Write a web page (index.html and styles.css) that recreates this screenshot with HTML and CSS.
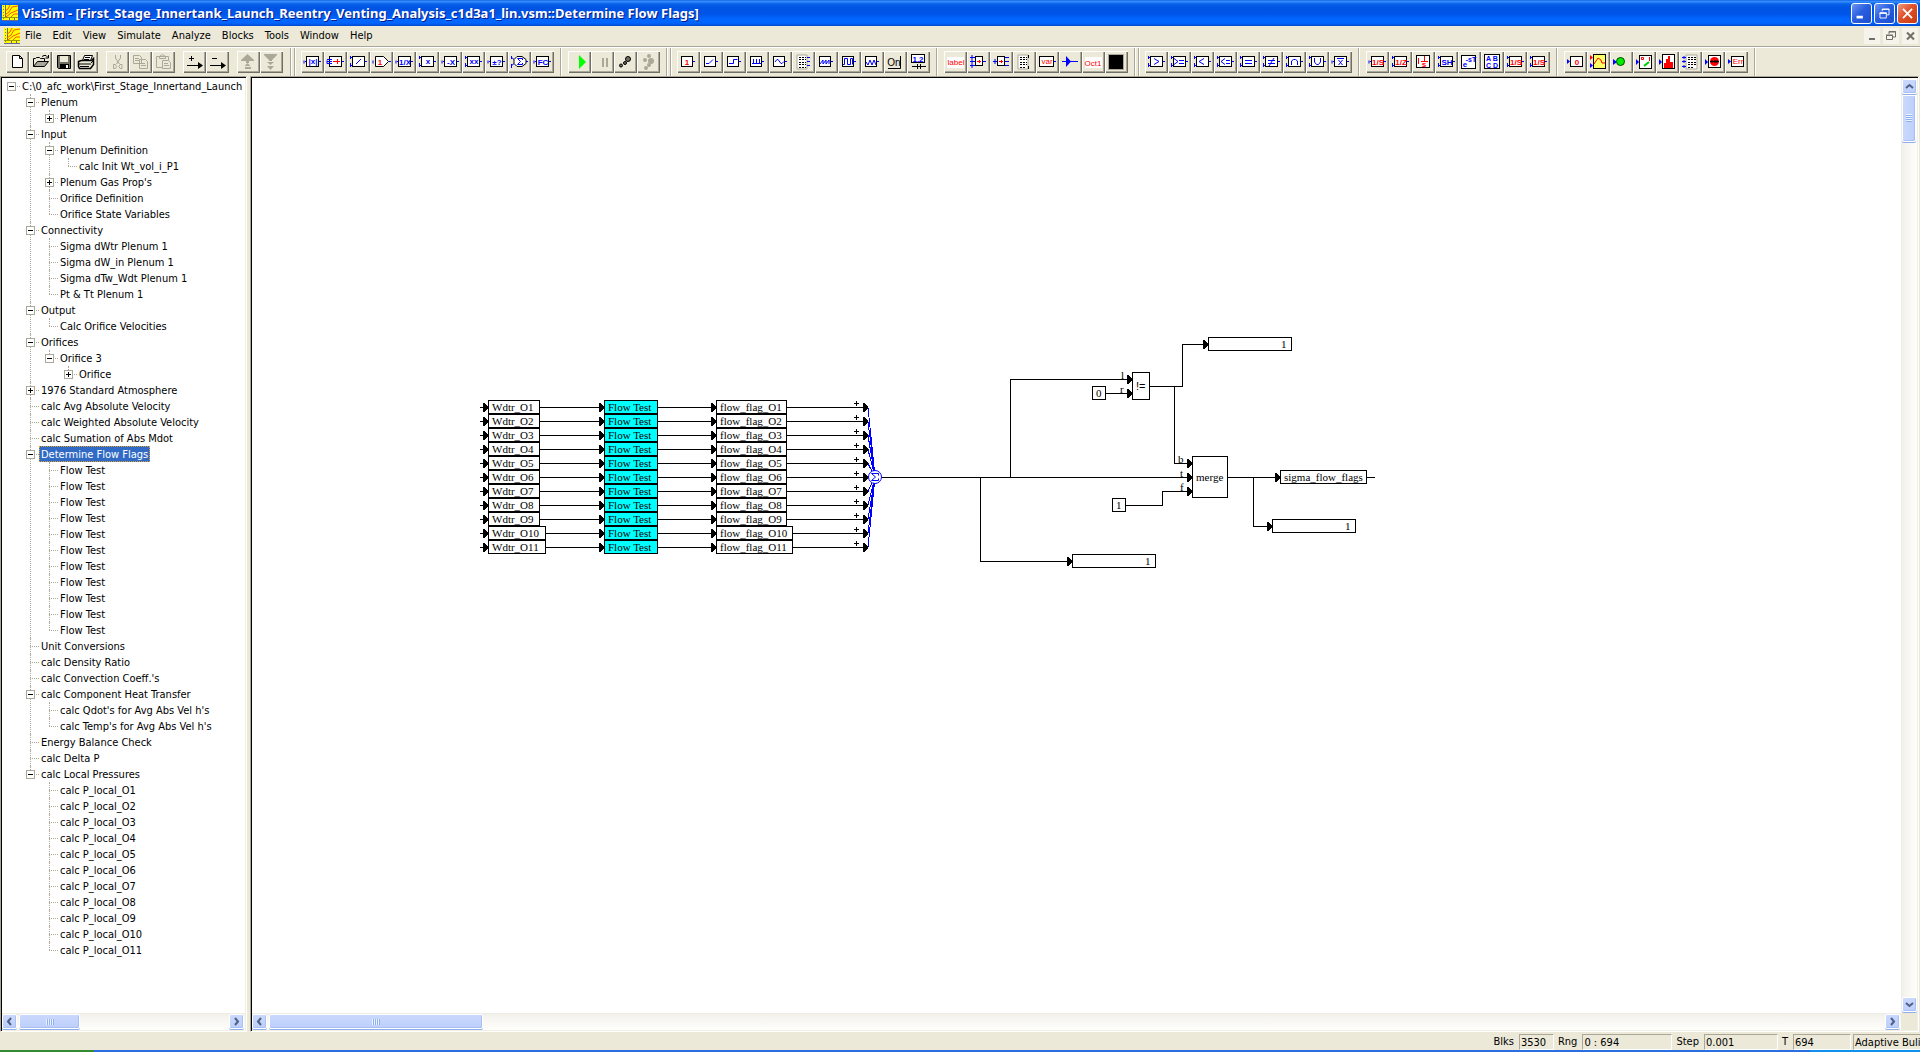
FILE: index.html
```html
<!DOCTYPE html>
<html lang="en">
<head>
<meta charset="utf-8">
<title>VisSim</title>
<link rel="stylesheet" href="styles.css">
</head>
<body>
<svg class="defs" aria-hidden="true">
  <symbol id="app" viewBox="0 0 16 16">
    <rect width="16" height="16" fill="#ff0"/>
    <path d="M0 15.500h16M3.500 0v12M7.500 13v3M12.500 13v3" stroke="#669" fill="none"/>
    <path d="M0 12.500h16" stroke="#990" />
    <path d="M3 6l3-2 2-4M3 10l4-3 3-5 6-1M4 12l5-4 7-3M9 12l3-3h4" stroke="#f50" fill="none"/>
    <path d="M1.500 1v14" stroke="#882" stroke-dasharray="1 2"/>
  </symbol>
  <symbol id="b0" viewBox="0 0 23 22">
    <rect x="4.500" y="5.500" width="11" height="10" fill="#fff" stroke="#000"/>
    <path d="M16 10.500h2" stroke="#00f"/>
  </symbol>
  <symbol id="b1" viewBox="0 0 23 22">
    <rect x="5.500" y="5.500" width="12" height="10" fill="#fff" stroke="#000"/>
    <path d="M3 9.500v3M4 10.500h1M18 10.500h2" stroke="#00f"/>
  </symbol>
  <symbol id="b2" viewBox="0 0 23 22">
    <rect x="5.500" y="5.500" width="12" height="10" fill="#fff" stroke="#000"/>
    <path d="M3.500 5v3M4 6.500h1M3.500 12v4M4 14.500h1M18 10.500h2" stroke="#00f"/>
  </symbol>
  <symbol id="sink" viewBox="0 0 23 22">
    <rect x="6.500" y="5.500" width="12" height="10" fill="#fff" stroke="#000"/>
    <path d="M3 8v5l3-2.500z" fill="#00f"/>
  </symbol>
</svg>

<header class="titlebar">
  <svg class="app-icon"><use href="#app"/></svg>
  <h1 class="title">VisSim - [First_Stage_Innertank_Launch_Reentry_Venting_Analysis_c1d3a1_lin.vsm::Determine Flow Flags]</h1>
  <div class="win-buttons">
    <button class="win-btn" aria-label="Minimize"><svg viewBox="0 0 21 21"><path d="M5 14.500h7" stroke="#fff" stroke-width="3"/></svg></button>
    <button class="win-btn" aria-label="Restore"><svg viewBox="0 0 21 21"><path d="M8 8V5.500h7.500V12H13M5.500 9.500h7v6h-7zM5 10.500h8M8 6h8" stroke="#fff" fill="none"/></svg></button>
    <button class="win-btn win-close" aria-label="Close"><svg viewBox="0 0 21 21"><path d="M5.500 5.500l10 10M15.500 5.500l-10 10" stroke="#fff" stroke-width="2"/></svg></button>
  </div>
</header>

<nav class="menubar">
  <svg class="app-icon"><use href="#app"/></svg>
  <button class="menu">File</button><button class="menu">Edit</button><button class="menu">View</button><button class="menu">Simulate</button><button class="menu">Analyze</button><button class="menu">Blocks</button><button class="menu">Tools</button><button class="menu">Window</button><button class="menu">Help</button>
  <div class="mdi-buttons">
    <button class="mdi-btn" aria-label="Minimize document"><svg viewBox="0 0 16 16"><path d="M5 11h6" stroke="#716f64" stroke-width="2"/></svg></button>
    <button class="mdi-btn" aria-label="Restore document"><svg viewBox="0 0 16 16"><path d="M6 6V3.500h6.500V9H10M3.500 7.500h6v4h-6zM3 7h7M6 4h7" stroke="#716f64" fill="none"/></svg></button>
    <button class="mdi-btn" aria-label="Close document"><svg viewBox="0 0 16 16"><path d="M5 4.500l7 7M12 4.500l-7 7" stroke="#716f64" stroke-width="2"/></svg></button>
  </div>
</nav>

<div class="toolbar" role="toolbar">
  <div class="band first">
    <div class="group">
      <button class="tool" aria-label="New"><svg viewBox="0 0 23 22"><path d="M6.500 4.500h7l3 3v9h-10zM13.500 4.500v3h3" fill="#fff" stroke="#000"/></svg></button>
      <button class="tool" aria-label="Open"><svg viewBox="0 0 23 22"><path d="M4.500 15.500v-8h2l1-1h3l1 1h4v3" fill="#ece9d8" stroke="#000"/><path d="M4.500 15.500l4-5h11l-4 5z" fill="#aca899" stroke="#000"/><path d="M13 5.500l2-1h2l2 2M19.500 4v3h-3" stroke="#000" fill="none"/></svg></button>
      <button class="tool" aria-label="Save"><svg viewBox="0 0 23 22"><path d="M5.500 4.500h13v13h-12l-1-1z" fill="#716f64" stroke="#000"/><path d="M8 5h8v6H8z" fill="#ece9d8"/><path d="M8 13h9v4H8z" fill="#000"/><path d="M14 14h2v3h-2z" fill="#fff"/></svg></button>
      <button class="tool" aria-label="Print"><svg viewBox="0 0 23 22"><path d="M7.500 9.500l2-5h8l-2 5z" fill="#fff" stroke="#000"/><path d="M10 6.500h5M9 8.500h5" stroke="#000"/><path d="M3.500 10.500l3-1h10l2-2v6l-3 4h-11l-1-2z" fill="#ece9d8" stroke="#000" stroke-width="1.500"/><path d="M4 13h12M5 15.500h9M16 12l2-2" stroke="#000" fill="none"/></svg></button>
    </div>
    <div class="group">
      <button class="tool" aria-label="Cut" disabled><svg viewBox="0 0 23 22"><path d="M9.500 4v3l4 6M14.500 4v3l-4 6" stroke="#aca899" fill="none"/><path d="M7.500 13.500h2l1 2-1 2h-2zM14 13.500h2v4h-2l-1-2z" stroke="#aca899" fill="none"/></svg></button>
      <button class="tool" aria-label="Copy" disabled><svg viewBox="0 0 23 22"><path d="M4.500 4.500h6l2 2v6h-8zM6 7.500h4M6 9.500h5M10.500 8.500h6l2 2v7h-8zM12 12.500h4M12 14.500h5" fill="#ece9d8" stroke="#aca899"/></svg></button>
      <button class="tool" aria-label="Paste" disabled><svg viewBox="0 0 23 22"><path d="M4.500 5.500h12v11h-12zM7.500 7.500v-2l2-1.500h2l2 1.500v2z" fill="#ece9d8" stroke="#aca899"/><path d="M10.500 9.500h6l2 2v6h-8zM12 12.500h4M12 14.500h5" fill="#ece9d8" stroke="#aca899"/></svg></button>
    </div>
    <div class="group">
      <button class="tool" aria-label="Add connector"><svg viewBox="0 0 23 22"><path d="M6 7.500h5M8.500 5v5M4 14.500h13" stroke="#000"/><path d="M15 11v7l5-3.500z"/></svg></button>
      <button class="tool" aria-label="Remove connector"><svg viewBox="0 0 23 22"><path d="M6 7.500h5M4 14.500h13" stroke="#000"/><path d="M15 11v7l5-3.500z"/></svg></button>
    </div>
    <div class="group">
      <button class="tool" aria-label="Move up" disabled><svg viewBox="0 0 23 22" fill="#aca899"><path d="M10.500 3l6.500 6v1h-5v2h-3v-2H4V9zM10.500 12l3 3h-6zM8 16h6v2H8z"/></svg></button>
      <button class="tool" aria-label="Move down" disabled><svg viewBox="0 0 23 22" fill="#aca899"><path d="M4 3h13v1l-5 5v1H9V9L4 4zM7 11h7l-3.500 3zM7 15h7l-3.500 4z"/></svg></button>
    </div>
  </div>
  <div class="sep double"></div>
  <div class="band">
    <button class="tool" aria-label="abs"><svg><use href="#b1"/><text x="12" y="13">|x|</text></svg></button>
    <button class="tool" aria-label="convert"><svg><use href="#b1"/><path d="M9 10.500h7M13.500 8v5" stroke="#f00"/><path d="M3 8.500h5M3 10.500h5M3 12.500h5" stroke="#00f"/></svg></button>
    <button class="tool" aria-label="gain line"><svg><use href="#b2"/><path d="M9 13l5-5" stroke="#00f"/></svg></button>
    <button class="tool" aria-label="gain"><svg><path d="M5.500 5.500h8l5 5-5 5h-8z" fill="#fff" stroke="#000"/><path d="M3 9.500v3M19 10.500h2" stroke="#00f"/><text class="red" x="10" y="14">1</text></svg></button>
    <button class="tool" aria-label="reciprocal"><svg><use href="#b1"/><text x="12" y="14">1/X</text></svg></button>
    <button class="tool" aria-label="multiply"><svg><use href="#b2"/><text x="12" y="13">x</text></svg></button>
    <button class="tool" aria-label="negate"><svg><use href="#b1"/><text x="12" y="14">-X</text></svg></button>
    <button class="tool" aria-label="power"><svg><use href="#b2"/><text x="12" y="13">xx</text></svg></button>
    <button class="tool" aria-label="sign"><svg><use href="#b1"/><text x="12" y="14">±?</text></svg></button>
    <button class="tool" aria-label="summing junction"><svg><path d="M3 6l5 4M3 15l5-4M3.500 5v3M3.500 13v4M16 10.500h4" stroke="#00f"/><path d="M9 5.500h5l4 3v4l-4 3H9l-3-3v-4z" fill="#fff" stroke="#000"/><path d="M14.500 9V7.500h-5l3 3-3 3h5V12" stroke="#00f" fill="none"/></svg></button>
    <button class="tool" aria-label="unit conversion"><svg><use href="#b1"/><text x="12" y="14">FC</text></svg></button>
  </div>
  <div class="sep"></div>
  <div class="band">
    <button class="tool" aria-label="Go"><svg><path d="M11 4l7 7-7 7z" fill="#0f0"/></svg></button>
    <button class="tool" aria-label="Stop" disabled><svg><path d="M12 7v9M16 7v9" stroke="#aca899" stroke-width="2"/></svg></button>
    <button class="tool" aria-label="Step"><svg fill="#716f64" stroke="#000"><circle cx="14" cy="8" r="2.500"/><circle cx="11" cy="12" r="1.500"/><circle cx="7" cy="14.500" r="1.500"/></svg></button>
    <button class="tool" aria-label="Continue" disabled><svg fill="#aca899"><circle cx="12" cy="5" r="2"/><circle cx="8" cy="9" r="2"/><circle cx="14" cy="10" r="3"/><circle cx="12" cy="14" r="2"/><circle cx="9" cy="17" r="2"/></svg></button>
  </div>
  <div class="sep double"></div>
  <div class="band">
    <button class="tool" aria-label="const"><svg><use href="#b0"/><text class="red" x="10" y="14">1</text></svg></button>
    <button class="tool" aria-label="ramp"><svg><use href="#b0"/><path d="M6 12.500h3l4-4" stroke="#00f" fill="none"/></svg></button>
    <button class="tool" aria-label="step"><svg><use href="#b0"/><path d="M6 12.500h4.500v-4h4" stroke="#00f" fill="none"/></svg></button>
    <button class="tool" aria-label="pulse train"><svg><use href="#b0"/><path d="M6 12.500h9M7.500 12V8M10.500 12V8M13.500 12V8" stroke="#00f" fill="none"/></svg></button>
    <button class="tool" aria-label="sinusoid"><svg><use href="#b0"/><path d="M6 11l2-2.500h1l3 4h1l2-2" stroke="#00f" fill="none"/></svg></button>
    <button class="tool" aria-label="import"><svg><path d="M5 4h10v14H5z" fill="#fff" stroke="#aca899"/><path d="M7 6.500h7M7 8.500h7M7 11.500h7M7 13.500h7M7 16.500h7" stroke="#000" stroke-dasharray="2 1"/><path d="M15 6.500h3M15 10.500h3M15 14.500h3" stroke="#00f"/></svg></button>
    <button class="tool" aria-label="sawtooth"><svg><use href="#b0"/><path d="M5 13l3-4v4l3-4v4l3-4v4" stroke="#00f" fill="none"/></svg></button>
    <button class="tool" aria-label="square wave"><svg><use href="#b0"/><path d="M5 13.500h1.500v-6h3v6h3v-6h2v6" stroke="#00f" fill="none"/></svg></button>
    <button class="tool" aria-label="triangle wave"><svg><use href="#b0"/><path d="M5 11l2 3 2-5 2 5 2-5 2 5" stroke="#00f" fill="none"/></svg></button>
    <button class="tool" aria-label="on button"><svg><path d="M4 17.500h12.500V5" stroke="#000" fill="none"/><text class="dark" x="10" y="15">On</text></svg></button>
    <button class="tool" aria-label="slider"><svg><rect x="4.500" y="3.500" width="13" height="8" fill="#fff" stroke="#000"/><text x="11" y="11">1.2</text><path d="M5 15.500h14M10.500 13v5M13.500 13v5" stroke="#000"/></svg></button>
  </div>
  <div class="sep"></div>
  <div class="band">
    <button class="tool" aria-label="label"><svg><path d="M3 6h17v11H3z" fill="#fff"/><text class="red thin" x="12" y="14">label</text></svg></button>
    <button class="tool" aria-label="scalar to vector"><svg><path d="M3 6.500h6M3 10.500h6M3 14.500h6M5 4v13M16 10.500h3" stroke="#00f"/><rect x="8.500" y="5.500" width="7" height="9" fill="#fff" stroke="#000"/><path d="M10 10.500h4M12.500 9v3" stroke="#f00"/></svg></button>
    <button class="tool" aria-label="vector to scalar"><svg><path d="M3 10.500h4M5 8v5M14 6.500h5M14 10.500h5M14 14.500h5" stroke="#00f"/><rect x="7.500" y="5.500" width="7" height="9" fill="#fff" stroke="#000"/><path d="M9 10.500h4M11.500 9v3" stroke="#f00"/></svg></button>
    <button class="tool" aria-label="comment"><svg><path d="M5 4h10v14H5z" fill="#fff" stroke="#aca899"/><path d="M7 6.500h7M7 8.500h7M7 11.500h7M7 13.500h7M7 16.500h6" stroke="#000" stroke-dasharray="2 1"/><path d="M15.500 4v3M15.500 15v3" stroke="#000"/></svg></button>
    <button class="tool" aria-label="variable"><svg><rect x="3.500" y="5.500" width="14" height="10" fill="#fff" stroke="#000"/><path d="M18 10.500h2" stroke="#00f"/><text class="red thin" x="11" y="13">var</text></svg></button>
    <button class="tool" aria-label="wire positioner"><svg><path d="M3 10.500h16" stroke="#00f"/><path d="M7 5v11l5-5.500z" fill="#00f"/></svg></button>
    <button class="tool" aria-label="date"><svg><path d="M3 6h17v11H3z" fill="#fff"/><text class="red thin" x="11" y="15">Oct1</text></svg></button>
    <button class="tool" aria-label="bezel"><svg><rect x="3.500" y="3.500" width="15" height="15" stroke="#aca899"/></svg></button>
  </div>
  <div class="sep double"></div>
  <div class="band">
    <button class="tool" aria-label="greater"><svg><use href="#b2"/><path d="M9 7.500l5 3-5 3" stroke="#00f" fill="none"/></svg></button>
    <button class="tool" aria-label="greater or equal"><svg><use href="#b2"/><path d="M6 7.500l4 3-4 3M11 9.500h5M11 12.500h5" stroke="#00f" fill="none"/></svg></button>
    <button class="tool" aria-label="less"><svg><use href="#b2"/><path d="M13 7.500l-5 3 5 3" stroke="#00f" fill="none"/></svg></button>
    <button class="tool" aria-label="less or equal"><svg><use href="#b2"/><path d="M11 7.500l-4 3 4 3M12 9.500h4M12 12.500h4" stroke="#00f" fill="none"/></svg></button>
    <button class="tool" aria-label="equal"><svg><use href="#b2"/><path d="M8 9.500h7M8 12.500h7" stroke="#00f" fill="none"/></svg></button>
    <button class="tool" aria-label="not equal"><svg><use href="#b2"/><path d="M8 9.500h7M8 12.500h7M14 7l-5 8" stroke="#00f" fill="none"/></svg></button>
    <button class="tool" aria-label="and"><svg><use href="#b2"/><path d="M8.500 14v-4l2-1.500h2l2 1.500v4" stroke="#00f" fill="none"/></svg></button>
    <button class="tool" aria-label="or"><svg><use href="#b2"/><path d="M8.500 7v4l2 2.500h2l2-2.500V7" stroke="#00f" fill="none"/></svg></button>
    <button class="tool" aria-label="not"><svg><use href="#b1"/><path d="M8 7.500h7M9.500 9l4 5M13.500 9l-4 5" stroke="#00f" fill="none"/></svg></button>
  </div>
  <div class="sep"></div>
  <div class="band">
    <button class="tool" aria-label="integrator"><svg><use href="#b1"/><text class="red" x="12" y="14">1/S</text></svg></button>
    <button class="tool" aria-label="unit delay"><svg><use href="#b2"/><text class="red" x="12" y="14">1/Z</text></svg></button>
    <button class="tool" aria-label="transfer function"><svg><rect x="4.500" y="4.500" width="13" height="12" fill="#fff" stroke="#000"/><path d="M9 10.500h7M12.500 5v6M6.500 7v6" stroke="#f00"/><text class="red" x="12" y="16">s</text></svg></button>
    <button class="tool" aria-label="sample hold"><svg><use href="#b2"/><text x="12" y="14">SH</text></svg></button>
    <button class="tool" aria-label="time delay"><svg><rect x="3.500" y="4.500" width="14" height="13" fill="#fff" stroke="#000"/><text x="7" y="16">e</text><text class="tiny" x="13" y="11">-sT</text></svg></button>
    <button class="tool" aria-label="state space"><svg><rect x="3.500" y="3.500" width="15" height="14" fill="#fff" stroke="#000"/><text class="tiny" x="11" y="10">A B</text><text class="tiny" x="11" y="17">C D</text></svg></button>
    <button class="tool" aria-label="reset integrator"><svg><use href="#b2"/><text class="red" x="12" y="14">1/S</text></svg></button>
    <button class="tool" aria-label="limited integrator"><svg><use href="#b2"/><text class="red" x="12" y="14">1/S</text></svg></button>
  </div>
  <div class="sep"></div>
  <div class="band">
    <button class="tool" aria-label="display"><svg><use href="#sink"/><text class="red" x="13" y="14">0</text></svg></button>
    <button class="tool" aria-label="plot"><svg><rect x="6.500" y="3.500" width="12" height="14" fill="#ff6" stroke="#000"/><path d="M3 4v5l3-2.500z" fill="#f00"/><path d="M3 12v5l3-2.500z" fill="#00f"/><path d="M7 13l4-6 3 2 1 3h3" stroke="#f00" fill="none"/></svg></button>
    <button class="tool" aria-label="light"><svg><path d="M3 8v6l4-3z" fill="#00f"/><circle cx="10.500" cy="10.500" r="4" fill="#0e0" stroke="#040"/></svg></button>
    <button class="tool" aria-label="meter"><svg><rect x="6.500" y="4.500" width="12" height="13" fill="#fff" stroke="#000"/><path d="M3 8v6l3-3z" fill="#00f"/><path d="M8.500 6.500h2v2h-2zM16.500 6v4" stroke="#f00" fill="none"/><path d="M11 15l5-4" stroke="#0c0" stroke-width="2"/></svg></button>
    <button class="tool" aria-label="histogram"><svg><rect x="6.500" y="3.500" width="12" height="14" fill="#fff" stroke="#000"/><path d="M3 8v6l3-3z" fill="#00f"/><path d="M8 17v-5h2V8h2V5h2v6h3v6z" fill="#f00"/></svg></button>
    <button class="tool" aria-label="export"><svg><path d="M7 4h11v14H7z" fill="#fff" stroke="#aca899"/><path d="M9 6.500h8M9 8.500h8M9 11.500h8M9 13.500h8M9 16.500h6" stroke="#000" stroke-dasharray="2 1"/><path d="M3 6.500h4M3 10.500h4M3 15.500h4M5 5v3M5 9v3M5 14v3" stroke="#00f"/></svg></button>
    <button class="tool" aria-label="stop"><svg><rect x="6.500" y="4.500" width="12" height="12" fill="#fff" stroke="#000"/><path d="M3 8v6l3-3z" fill="#00f"/><circle cx="12.500" cy="10.500" r="4.500" fill="#f00"/><path d="M8 10.500h9M10 9v3M13 9v3M15 9v3" stroke="#000"/></svg></button>
    <button class="tool" aria-label="error"><svg><use href="#sink"/><text class="red thin" x="13" y="13">Err</text></svg></button>
  </div>
  <div class="sep"></div>
</div>

<main class="workspace">
  <aside class="pane tree-pane">
    <div class="tree-scroll">
    <ul class="tree">
      <li class="root"><div class="row"><button class="toggle open" aria-label="Collapse"></button><span class="label">C:\0_afc_work\First_Stage_Innertand_Launch</span></div>
      <ul>
        <li><div class="row"><button class="toggle open" aria-label="Collapse"></button><span class="label">Plenum</span></div>
          <ul><li><div class="row"><button class="toggle" aria-label="Expand"></button><span class="label">Plenum</span></div></li></ul></li>
        <li><div class="row"><button class="toggle open" aria-label="Collapse"></button><span class="label">Input</span></div>
          <ul>
            <li><div class="row"><button class="toggle open" aria-label="Collapse"></button><span class="label">Plenum Definition</span></div>
              <ul><li><div class="row"><span class="label">calc Init Wt_vol_i_P1</span></div></li></ul></li>
            <li><div class="row"><button class="toggle" aria-label="Expand"></button><span class="label">Plenum Gas Prop's</span></div></li>
            <li><div class="row"><span class="label">Orifice Definition</span></div></li>
            <li><div class="row"><span class="label">Orifice State Variables</span></div></li>
          </ul></li>
        <li><div class="row"><button class="toggle open" aria-label="Collapse"></button><span class="label">Connectivity</span></div>
          <ul>
            <li><div class="row"><span class="label">Sigma dWtr Plenum 1</span></div></li>
            <li><div class="row"><span class="label">Sigma dW_in Plenum 1</span></div></li>
            <li><div class="row"><span class="label">Sigma dTw_Wdt Plenum 1</span></div></li>
            <li><div class="row"><span class="label">Pt &amp; Tt Plenum 1</span></div></li>
          </ul></li>
        <li><div class="row"><button class="toggle open" aria-label="Collapse"></button><span class="label">Output</span></div>
          <ul><li><div class="row"><span class="label">Calc Orifice Velocities</span></div></li></ul></li>
        <li><div class="row"><button class="toggle open" aria-label="Collapse"></button><span class="label">Orifices</span></div>
          <ul><li><div class="row"><button class="toggle open" aria-label="Collapse"></button><span class="label">Orifice 3</span></div>
            <ul><li><div class="row"><button class="toggle" aria-label="Expand"></button><span class="label">Orifice</span></div></li></ul></li></ul></li>
        <li><div class="row"><button class="toggle" aria-label="Expand"></button><span class="label">1976 Standard Atmosphere</span></div></li>
        <li><div class="row"><span class="label">calc Avg Absolute Velocity</span></div></li>
        <li><div class="row"><span class="label">calc Weighted Absolute Velocity</span></div></li>
        <li><div class="row"><span class="label">calc Sumation of Abs Mdot</span></div></li>
        <li><div class="row"><button class="toggle open" aria-label="Collapse"></button><span class="label selected">Determine Flow Flags</span></div>
          <ul>
            <li><div class="row"><span class="label">Flow Test</span></div></li>
            <li><div class="row"><span class="label">Flow Test</span></div></li>
            <li><div class="row"><span class="label">Flow Test</span></div></li>
            <li><div class="row"><span class="label">Flow Test</span></div></li>
            <li><div class="row"><span class="label">Flow Test</span></div></li>
            <li><div class="row"><span class="label">Flow Test</span></div></li>
            <li><div class="row"><span class="label">Flow Test</span></div></li>
            <li><div class="row"><span class="label">Flow Test</span></div></li>
            <li><div class="row"><span class="label">Flow Test</span></div></li>
            <li><div class="row"><span class="label">Flow Test</span></div></li>
            <li><div class="row"><span class="label">Flow Test</span></div></li>
          </ul></li>
        <li><div class="row"><span class="label">Unit Conversions</span></div></li>
        <li><div class="row"><span class="label">calc Density Ratio</span></div></li>
        <li><div class="row"><span class="label">calc Convection Coeff.'s</span></div></li>
        <li><div class="row"><button class="toggle open" aria-label="Collapse"></button><span class="label">calc Component Heat Transfer</span></div>
          <ul>
            <li><div class="row"><span class="label">calc Qdot's for Avg Abs Vel h's</span></div></li>
            <li><div class="row"><span class="label">calc Temp's for Avg Abs Vel h's</span></div></li>
          </ul></li>
        <li><div class="row"><span class="label">Energy Balance Check</span></div></li>
        <li><div class="row"><span class="label">calc Delta P</span></div></li>
        <li><div class="row"><button class="toggle open" aria-label="Collapse"></button><span class="label">calc Local Pressures</span></div>
          <ul>
            <li><div class="row"><span class="label">calc P_local_O1</span></div></li>
            <li><div class="row"><span class="label">calc P_local_O2</span></div></li>
            <li><div class="row"><span class="label">calc P_local_O3</span></div></li>
            <li><div class="row"><span class="label">calc P_local_O4</span></div></li>
            <li><div class="row"><span class="label">calc P_local_O5</span></div></li>
            <li><div class="row"><span class="label">calc P_local_O6</span></div></li>
            <li><div class="row"><span class="label">calc P_local_O7</span></div></li>
            <li><div class="row"><span class="label">calc P_local_O8</span></div></li>
            <li><div class="row"><span class="label">calc P_local_O9</span></div></li>
            <li><div class="row"><span class="label">calc P_local_O10</span></div></li>
            <li><div class="row"><span class="label">calc P_local_O11</span></div></li>
          </ul></li>
      </ul></li>
    </ul>
    </div>
    <div class="hscroll">
      <button class="sb-btn" aria-label="Scroll left"><svg viewBox="0 0 9 9"><path d="M6 1L3 4.500 6 8"/></svg></button>
      <div class="sb-thumb tree-thumb"></div>
      <button class="sb-btn sb-end" aria-label="Scroll right"><svg viewBox="0 0 9 9"><path d="M3 1l3 3.500L3 8"/></svg></button>
    </div>
  </aside>

  <section class="pane canvas-pane">
    <div class="canvas">
      <svg class="diagram" width="1168" height="522" viewBox="252 78 1168 522">
        <defs>
          <path id="head" d="M-5 -4.500v9h1l4-4v-1l-4-4z"/>
          <g id="flow">
            <path class="wire" d="M480 407.500h5M540 407.500h61M658 407.500h55M787 407.500h78"/>
            <use href="#head" x="488" y="407.500"/><use href="#head" x="604" y="407.500"/><use href="#head" x="716" y="407.500"/><use href="#head" x="868" y="407.500"/>
            <path class="wire" d="M854 403.500h5M856.500 401v5"/>
            <rect class="box cyan" x="604.500" y="400.500" width="53" height="13"/>
            <text x="608" y="411">Flow Test</text>
          </g>
          <g id="narrow"><rect class="box" x="488.500" y="400.500" width="51" height="13"/><rect class="box" x="716.500" y="400.500" width="70" height="13"/></g>
          <g id="wide"><rect class="box" x="488.500" y="400.500" width="57" height="13"/><rect class="box" x="716.500" y="400.500" width="76" height="13"/></g>
        </defs>

        <path class="rays" d="M868 407.500L875 477M868 421.500L875 477M868 435.500L875 477M868 449.500L875 477M868 463.500L875 477M868 491.500L875 477M868 505.500L875 477M868 519.500L875 477M868 533.500L875 477M868 547.500L875 477"/>

        <g><use href="#flow"/><use href="#narrow"/><text x="492" y="411">Wdtr_O1</text><text x="720" y="411">flow_flag_O1</text></g>
        <g transform="translate(0 14)"><use href="#flow"/><use href="#narrow"/><text x="492" y="411">Wdtr_O2</text><text x="720" y="411">flow_flag_O2</text></g>
        <g transform="translate(0 28)"><use href="#flow"/><use href="#narrow"/><text x="492" y="411">Wdtr_O3</text><text x="720" y="411">flow_flag_O3</text></g>
        <g transform="translate(0 42)"><use href="#flow"/><use href="#narrow"/><text x="492" y="411">Wdtr_O4</text><text x="720" y="411">flow_flag_O4</text></g>
        <g transform="translate(0 56)"><use href="#flow"/><use href="#narrow"/><text x="492" y="411">Wdtr_O5</text><text x="720" y="411">flow_flag_O5</text></g>
        <g transform="translate(0 70)"><use href="#flow"/><use href="#narrow"/><text x="492" y="411">Wdtr_O6</text><text x="720" y="411">flow_flag_O6</text></g>
        <g transform="translate(0 84)"><use href="#flow"/><use href="#narrow"/><text x="492" y="411">Wdtr_O7</text><text x="720" y="411">flow_flag_O7</text></g>
        <g transform="translate(0 98)"><use href="#flow"/><use href="#narrow"/><text x="492" y="411">Wdtr_O8</text><text x="720" y="411">flow_flag_O8</text></g>
        <g transform="translate(0 112)"><use href="#flow"/><use href="#narrow"/><text x="492" y="411">Wdtr_O9</text><text x="720" y="411">flow_flag_O9</text></g>
        <g transform="translate(0 126)"><use href="#flow"/><use href="#wide"/><text x="492" y="411">Wdtr_O10</text><text x="720" y="411">flow_flag_O10</text></g>
        <g transform="translate(0 140)"><use href="#flow"/><use href="#wide"/><text x="492" y="411">Wdtr_O11</text><text x="720" y="411">flow_flag_O11</text></g>

        <g class="sum">
          <circle cx="875" cy="477" r="6.500"/>
          <path d="M878.500 475.500v-2h-7l4 3.500-4 3.500h7v-2"/>
        </g>

        <path class="wire" d="M882 477.500h306M980.500 477v84.500h88M1010.500 478v-98.500h118M1106 393.500h22M1150 386.500h32.500v-42h22M1174.500 386v77.500h14M1126 505.500h36.500v-14h26M1228 477.500h49M1253.500 477v49.500h16M1367 477.500h8"/>
        <use href="#head" x="1072" y="561.500"/><use href="#head" x="1132" y="379.500"/><use href="#head" x="1132" y="393.500"/><use href="#head" x="1208" y="344.500"/>
        <use href="#head" x="1192" y="463.500"/><use href="#head" x="1192" y="477.500"/><use href="#head" x="1192" y="491.500"/><use href="#head" x="1280" y="477.500"/><use href="#head" x="1272" y="526.500"/>

        <rect class="box" x="1208.500" y="337.500" width="83" height="13"/><text x="1281" y="348">1</text>
        <rect class="box" x="1072.500" y="554.500" width="83" height="13"/><text x="1145" y="565">1</text>
        <rect class="box" x="1272.500" y="519.500" width="83" height="13"/><text x="1345" y="530">1</text>
        <rect class="box" x="1092.500" y="386.500" width="13" height="13"/><text x="1096" y="397">0</text>
        <rect class="box" x="1112.500" y="498.500" width="13" height="13"/><text x="1116" y="509">1</text>
        <rect class="box" x="1132.500" y="372.500" width="17" height="27"/><text class="sans" x="1136" y="390">!=</text>
        <rect class="box" x="1192.500" y="456.500" width="35" height="41"/><text x="1196" y="481">merge</text>
        <rect class="box" x="1280.500" y="470.500" width="86" height="13"/><text x="1284" y="481">sigma_flow_flags</text>
        <text x="1121" y="379">l</text><text x="1120" y="393">r</text>
        <text x="1178" y="463">b</text><text x="1180" y="477">t</text><text x="1180" y="491">f</text>
      </svg>
    </div>
    <div class="vscroll">
      <button class="sb-btn" aria-label="Scroll up"><svg viewBox="0 0 9 9"><path d="M1 6l3.500-3L8 6"/></svg></button>
      <div class="sb-thumb v-thumb"></div>
      <button class="sb-btn sb-end" aria-label="Scroll down"><svg viewBox="0 0 9 9"><path d="M1 3l3.500 3L8 3"/></svg></button>
    </div>
    <div class="hscroll">
      <button class="sb-btn" aria-label="Scroll left"><svg viewBox="0 0 9 9"><path d="M6 1L3 4.500 6 8"/></svg></button>
      <div class="sb-thumb canvas-thumb"></div>
      <button class="sb-btn sb-end" aria-label="Scroll right"><svg viewBox="0 0 9 9"><path d="M3 1l3 3.500L3 8"/></svg></button>
    </div>
  </section>
</main>

<footer class="status">
  <span class="stat-label">Blks</span><span class="stat w-blks">3530</span>
  <span class="stat-label">Rng</span><span class="stat w-rng">0 : 694</span>
  <span class="stat-label">Step</span><span class="stat w-step">0.001</span>
  <span class="stat-label">T</span><span class="stat w-time">694</span>
  <span class="stat w-method">Adaptive Bulir</span>
</footer>
<div class="taskbar"><div class="start"></div><div class="tasks"></div><div class="tray"></div></div>
</body>
</html>
```
FILE: styles.css
```css
* { box-sizing: border-box; }

body {
  margin: 0;
  height: 100vh;
  display: flex;
  flex-direction: column;
  overflow: hidden;
  background: #ece9d8;
  color: #000;
  font: 11px/16px "DejaVu Sans Condensed", "Noto Sans", sans-serif;
}

button {
  margin: 0;
  padding: 0;
  border: 0;
  background: none;
  color: inherit;
  font: inherit;
}

svg { display: block; flex: none; }
.defs { position: absolute; width: 0; height: 0; }

/* Title bar */
.titlebar {
  flex: none;
  display: flex;
  align-items: center;
  height: 26px;
  padding: 0 2px;
  background: linear-gradient(#0a50d8 0, #3a92ff 1px, #2f86fa 2px, #0660e8 4px, #0054e3 8px, #0055e8 14px, #0166ff 19px, #0166ff 23px, #0048d0 26px);
}
.app-icon { width: 16px; height: 16px; }
.title {
  flex: 1;
  margin: 0 0 0 4px;
  color: #fff;
  font: bold 13px/20px "Noto Sans", sans-serif;
  white-space: nowrap;
  overflow: hidden;
  text-shadow: 1px 1px #0a1883;
}
.win-buttons { display: flex; gap: 2px; }
.win-btn {
  width: 21px;
  height: 21px;
  border: 1px solid #fff;
  border-radius: 3px;
  background: linear-gradient(135deg, #6d95f0, #2a5fe0 45%, #1c4dcf);
}
.win-btn svg { width: 19px; height: 19px; }
.win-close { background: linear-gradient(135deg, #f09a80, #e0502a 45%, #c83a10); }

/* Menu bar */
.menubar {
  flex: none;
  display: flex;
  align-items: center;
  height: 22px;
  padding: 0 2px 2px 4px;
  border-bottom: 1px solid #fff;
  box-shadow: inset 0 -1px #aca899;
}
.menu { padding: 0 6px 0 5px; height: 18px; }
.mdi-buttons { display: flex; gap: 3px; margin-left: auto; }
.mdi-btn { width: 16px; height: 16px; background: #f5f3ec; }
.mdi-btn svg { width: 16px; height: 16px; }

/* Toolbar */
.toolbar { flex: none; display: flex; height: 28px; }
.band { display: flex; padding-top: 3px; }
.band.first { gap: 8px; padding: 3px 1px 0 6px; }
.group { display: flex; }
.tool {
  width: 23px;
  height: 22px;
  box-shadow: inset 1px 1px #fff, inset -1px -1px #716f64, inset -2px -2px #aca899;
}
.tool svg { width: 23px; height: 22px; }
.tool text {
  font: bold 8px "Liberation Sans", sans-serif;
  text-anchor: middle;
  fill: #00f;
}
.tool .red { fill: #f00; }
.tool .thin { font-weight: normal; }
.tool .dark { fill: #000; font-size: 10px; font-weight: normal; }
.tool .tiny { font-size: 7px; }
.sep {
  width: 2px;
  margin: 0 6px;
  border-left: 1px solid #aca899;
  border-right: 1px solid #fff;
}
.sep.double {
  width: 6px;
  margin-right: 5px;
  box-shadow: inset 1px 0 #fff, inset -1px 0 #aca899;
}

/* Panes */
.workspace { flex: 1; display: flex; gap: 3px; min-height: 0; padding-right: 1px; }
.pane {
  display: grid;
  min-width: 0;
  min-height: 0;
  padding: 1px;
  background: #fff;
  border: 1px solid;
  border-color: #aca899 #fff #fff #aca899;
  box-shadow: inset 1px 1px #000, inset -1px -1px #f1efe2;
}
.tree-pane { flex: none; width: 247px; grid-template: 1fr 17px / 1fr; }
.canvas-pane {
  flex: 1;
  grid-template: 1fr 17px / 1fr 16px;
  background: #ece9d8;
}
.tree-scroll, .canvas { overflow: hidden; min-width: 0; min-height: 0; }
.canvas { background: #fff; }

/* Tree */
.tree, .tree ul { margin: 0; padding: 0; list-style: none; }
.tree ul { padding-left: 19px; }
.tree li { position: relative; }
.tree li::before {
  content: "";
  position: absolute;
  left: 9px;
  top: 0;
  bottom: 0;
  border-left: 1px dotted #aca899;
}
.tree li:last-child::before { bottom: auto; height: 8px; }
.tree .root::before { display: none; }
.row { position: relative; display: flex; height: 16px; padding-left: 18px; }
.row::before {
  content: "";
  position: absolute;
  left: 9px;
  top: 8px;
  width: 9px;
  border-top: 1px dotted #aca899;
}
.toggle {
  position: absolute;
  left: 5px;
  top: 4px;
  width: 9px;
  height: 9px;
  border: 1px solid #aca899;
  background:
    linear-gradient(#000, #000) center / 5px 1px no-repeat,
    linear-gradient(#000, #000) center / 1px 5px no-repeat,
    #fff;
}
.toggle.open { background: linear-gradient(#000, #000) center / 5px 1px no-repeat, #fff; }
.label { padding: 1px 2px 0; line-height: 15px; white-space: nowrap; }
.selected { background: #316ac5; color: #fff; outline: 1px dotted #e0a030; outline-offset: -1px; }

/* Scroll bars */
.hscroll, .vscroll { display: flex; }
.hscroll {
  grid-column: 1;
  gap: 2px;
  padding: 1px 1px 1px 0;
  background: linear-gradient(#eeede5, #f5f4ef 4px, #fefefb);
}
.vscroll {
  flex-direction: column;
  gap: 1px;
  padding: 1px;
  background: linear-gradient(90deg, #eeede5, #f5f4ef 4px, #fefefb);
}
.sb-btn, .sb-thumb {
  border: 1px solid #fff;
  border-radius: 2px;
  background: linear-gradient(#cbd8fd, #bccffb);
  box-shadow: inset -1px -1px #a9c0f6, 0 1px #8daee8;
}
.sb-btn {
  flex: none;
  width: 15px;
  height: 15px;
  display: flex;
  align-items: center;
  justify-content: center;
}
.sb-btn svg { width: 9px; height: 9px; }
.sb-btn path { fill: none; stroke: #4d6185; stroke-width: 2; }
.sb-end { margin-left: auto; }
.vscroll .sb-end { margin: auto 0 0; }
.hscroll .sb-thumb {
  background:
    repeating-linear-gradient(90deg, #eef4fe 0 1px, #8cb0f8 1px 2px) center / 8px 6px no-repeat,
    linear-gradient(#cbd8fd, #bccffb);
}
.tree-thumb { width: 61px; }
.canvas-thumb { width: 13%; }
.v-thumb {
  height: 5%;
  width: 14px;
  background:
    repeating-linear-gradient(#eef4fe 0 1px, #8cb0f8 1px 2px) center / 6px 8px no-repeat,
    linear-gradient(90deg, #cbd8fd, #bccffb);
}

/* Block diagram */
.diagram { shape-rendering: crispEdges; }
.diagram text { font: 11px "Liberation Serif", serif; }
.diagram .sans { font-family: "Liberation Sans", sans-serif; }
.wire { fill: none; stroke: #000; }
.box { fill: #fff; stroke: #000; }
.box.cyan { fill: #0ff; }
.rays { fill: none; stroke: #00f; }
.sum { fill: none; stroke: #00f; shape-rendering: auto; }
.sum circle { fill: #fff; }

/* Status bar */
.status {
  flex: none;
  display: flex;
  justify-content: flex-end;
  height: 18px;
  padding-top: 2px;
  white-space: nowrap;
  overflow: hidden;
}
.stat-label { padding: 0 5px 0 4px; }
.stat {
  flex: none;
  height: 16px;
  padding-left: 1px;
  line-height: 15px;
  border: 1px solid;
  border-color: #aca899 #fff #fff #aca899;
  overflow: hidden;
}
.w-blks { width: 35px; }
.w-rng { width: 90px; }
.w-step { width: 74px; }
.w-time { width: 58px; }
.w-method { width: 67px; margin-left: 2px; border-right: 0; }

.taskbar { flex: none; display: flex; height: 2px; }
.start { width: 94px; background: #338a32; }
.tasks { flex: 1; background: #2a6ee0; }
.tray { width: 110px; background: #1290e9; }
```
